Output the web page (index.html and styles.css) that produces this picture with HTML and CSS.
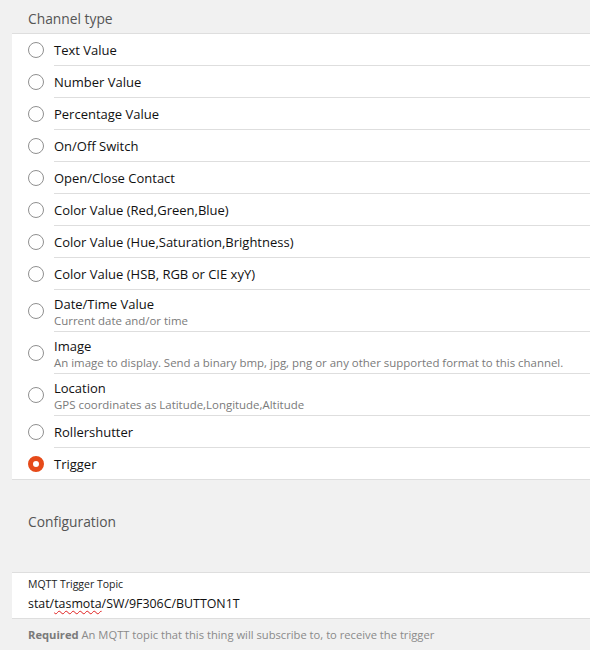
FILE: index.html
```html
<!DOCTYPE html>
<html>
<head>
<meta charset="utf-8">
<link rel="stylesheet" href="styles.css">
</head>
<body>
<div class="page">
  <div class="block-title">Channel type</div>
  <ul class="list">
    <li class="item"><span class="radio"></span><div class="inner"><div class="title">Text Value</div></div></li>
    <li class="item"><span class="radio"></span><div class="inner"><div class="title">Number Value</div></div></li>
    <li class="item"><span class="radio"></span><div class="inner"><div class="title">Percentage Value</div></div></li>
    <li class="item"><span class="radio"></span><div class="inner"><div class="title">On/Off Switch</div></div></li>
    <li class="item"><span class="radio"></span><div class="inner"><div class="title">Open/Close Contact</div></div></li>
    <li class="item"><span class="radio"></span><div class="inner"><div class="title">Color Value (Red,Green,Blue)</div></div></li>
    <li class="item"><span class="radio"></span><div class="inner"><div class="title">Color Value (Hue,Saturation,Brightness)</div></div></li>
    <li class="item"><span class="radio"></span><div class="inner"><div class="title">Color Value (HSB, RGB or CIE xyY)</div></div></li>
    <li class="item two"><span class="radio"></span><div class="inner"><div class="title">Date/Time Value</div><div class="sub">Current date and/or time</div></div></li>
    <li class="item two"><span class="radio"></span><div class="inner"><div class="title">Image</div><div class="sub">An image to display. Send a binary bmp, jpg, png or any other supported format to this channel.</div></div></li>
    <li class="item two"><span class="radio"></span><div class="inner"><div class="title">Location</div><div class="sub">GPS coordinates as Latitude,Longitude,Altitude</div></div></li>
    <li class="item"><span class="radio"></span><div class="inner"><div class="title">Rollershutter</div></div></li>
    <li class="item"><span class="radio checked"></span><div class="inner"><div class="title">Trigger</div></div></li>
  </ul>
  <div class="block-title config">Configuration</div>
  <div class="input-block">
    <div class="label">MQTT Trigger Topic</div>
    <div class="value">stat/<span class="spell">tasmota</span>/SW/9F306C/BUTTON1T</div>
  </div>
  <div class="info"><b>Required</b> An MQTT topic that this thing will subscribe to, to receive the trigger</div>
</div>
</body>
</html>
```
FILE: styles.css
```css
html, body {
  margin: 0;
  padding: 0;
  background: #f1f1f1;
}
body {
  font-family: "Open Sans", "Noto Sans", sans-serif;
  color: #000;
  width: 590px;
  height: 650px;
  overflow: hidden;
}
.page {
  padding-left: 12px;
}
.block-title {
  height: 33px;
  box-sizing: border-box;
  padding: 9px 0 0 16px;
  font-size: 13.8px;
  line-height: 20px;
  color: #555;
}
.block-title.config {
  height: 92px;
  padding-top: 32px;
}
.list {
  list-style: none;
  margin: 0;
  padding: 0;
  background: #fff;
  border-top: 1px solid #dedede;
  border-bottom: 1px solid #dedede;
}
.item {
  display: flex;
  align-items: center;
}
.radio {
  flex: none;
  width: 16px;
  height: 16px;
  box-sizing: border-box;
  border: 1.5px solid #909090;
  border-radius: 50%;
  margin: 0 10px 0 16px;
}
.radio.checked {
  border: 5px solid #e64a19;
  background: #fff;
}
.inner {
  flex: 1;
  min-height: 32px;
  box-sizing: border-box;
  display: flex;
  flex-direction: column;
  justify-content: center;
  border-bottom: 1px solid #dedede;
}
.item:last-child .inner {
  border-bottom: none;
  min-height: 31px;
}
.item.two .inner {
  min-height: 42px;
  padding-top: 1px;
}
.title {
  font-size: 13px;
  line-height: 18px;
  color: #111;
}
.sub {
  font-size: 11.45px;
  line-height: 15px;
  color: #7a7a7a;
  white-space: nowrap;
}
.input-block {
  background: #fff;
  border-top: 1px solid #dedede;
  border-bottom: 1px solid #dedede;
  height: 47px;
  box-sizing: border-box;
  padding: 3px 16px 0 16px;
}
.label {
  font-size: 10.5px;
  line-height: 16px;
  color: #222;
}
.value {
  font-size: 12.4px;
  line-height: 24px;
  color: #111;
}
.spell {
  text-decoration: underline wavy #e02020;
  text-decoration-thickness: 1px;
  text-underline-offset: 2px;
}
.info {
  padding: 8px 16px 0 16px;
  font-size: 11.2px;
  line-height: 16px;
  color: #8a8a8a;
}
.info b {
  color: #7a7a7a;
}
```
